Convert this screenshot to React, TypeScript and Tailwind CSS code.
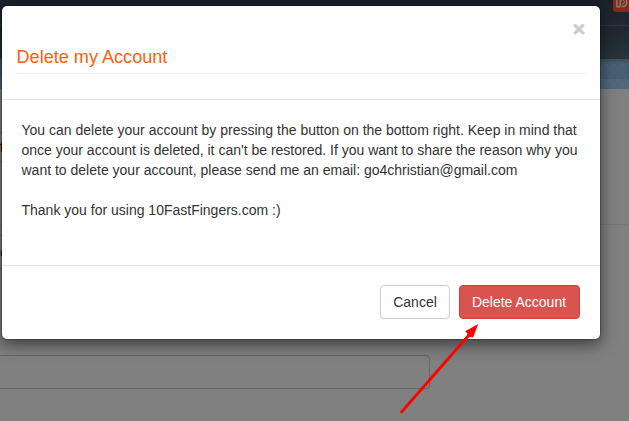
function PatreonBadge() {
  return (
    <svg className="block" width="16" height="12" viewBox="0 0 16 12">
      <path d="M0 0h16v12H3a3 3 0 0 1-3-3z" fill="#852a13" />
      <path d="M3.9 0v6.7h3.2" fill="none" stroke="#817b79" strokeWidth="1.5" />
      <path d="M7.2 6.7V1.5c0-1 .6-1.5 1.6-1.5M8.6 6.2c3 .8 5.2-1.2 5.2-3.8 0-1-.3-1.8-.8-2.4" fill="none" stroke="#817b79" strokeWidth="1.5" />
      <path d="M8.8 3.9c1.7.2 2.6-.6 2.6-1.7 0-.9-.5-1.5-1.3-2" fill="none" stroke="#817b79" strokeWidth="1" />
    </svg>
  );
}

function PageBackground() {
  return (
    <div className="flex h-full flex-col">
      <div className="flex h-[26px] shrink-0 justify-end border-b border-[#2f3a45] bg-gradient-to-b from-[#1a212b] to-[#1f2933]">
        <PatreonBadge />
      </div>
      <div className="h-[33px] shrink-0 bg-gradient-to-b from-[#1d262f] to-[#28333c]" />
      <div className="h-5 shrink-0 bg-[#475f75] bg-[repeating-conic-gradient(#475e73_0_25%,#496076_0_50%)] bg-[length:8px_8px] shadow-[inset_0_3px_3px_rgba(0,0,0,0.15)]" />
      <div className="h-2.5 shrink-0 bg-[#526980] bg-[repeating-conic-gradient(#50667b_0_25%,#52687d_0_50%)] bg-[length:8px_8px]" />
      <div className="flex grow flex-col bg-[#808080]">
        <div className="flex h-[136px] shrink-0 flex-col border-b border-[#757575]">
          <div className="mt-[43px] flex h-[30px] w-[5px] items-center border-y border-[#696969] text-sm text-[#210000]">
            t
          </div>
        </div>
        <div className="mt-2.5 flex h-[34px] w-2 shrink-0 items-center border-y border-[#696969] text-sm text-[#10153d]">
          c
        </div>
        <div className="mt-[86px] h-[34px] w-[430px] shrink-0 rounded-r border border-l-0 border-[#666]" />
      </div>
    </div>
  );
}

function DeleteAccountModal() {
  return (
    <div className="absolute top-[5px] left-px flex h-[335px] w-[600px] flex-col rounded-md border border-black/20 bg-white bg-clip-padding shadow-[0_5px_15px_rgba(0,0,0,0.5)]">
      <div className="h-[94px] shrink-0 border-b border-[#e5e5e5] px-[15px] pt-[15px]">
        <button className="float-right -mt-[3px] text-[21px] leading-[21px] font-bold text-[#ccc] [-webkit-text-stroke:0.8px_#ccc]">
          ×
        </button>
        <h4 className="clear-both pt-2">
          <span className="block h-[27px] border-b border-[#eee] text-[18.1px] leading-5 text-[#f26310] -indent-[0.5px]">
            Delete my Account
          </span>
        </h4>
      </div>
      <div className="grow pr-5 pl-[19.5px] pt-5 text-sm leading-5 whitespace-nowrap text-[#333]">
        <p>
          You can delete your account by pressing the button on the bottom right. Keep in mind that
          <br />
          once your account is deleted, it can't be restored. If you want to share the reason why you
          <br />
          want to delete your account, please send me an email: go4christian@gmail.com
        </p>
        <p className="mt-5">Thank you for using 10FastFingers.com :)</p>
      </div>
      <div className="flex h-[74px] shrink-0 items-start justify-end gap-[9px] border-t border-[#e5e5e5] px-5 pt-[19px] text-sm leading-5">
        <button className="h-[34px] w-[70px] rounded border border-[#ccc] bg-white text-[#333]">
          Cancel
        </button>
        <button className="h-[34px] w-[121px] rounded border border-[#d43f3a] bg-[#d9534f] pr-px text-white">
          Delete Account
        </button>
      </div>
    </div>
  );
}

function PointerArrow() {
  return (
    <svg className="absolute top-[320px] left-[396px]" width="86" height="96" viewBox="0 0 86 96">
      <path d="M5.5 92 73 15" stroke="#f00" strokeWidth="2.8" strokeLinecap="round" />
      <path d="M82.2 4 69.2 11.2l2.3 2.2-.3 2 2.2 1.8 2-.2 1.6.8z" fill="#f00" />
    </svg>
  );
}

export default function App() {
  return (
    <div className="relative h-[421px] w-[629px] overflow-hidden font-['Liberation_Sans',Arial,sans-serif]">
      <PageBackground />
      <DeleteAccountModal />
      <PointerArrow />
    </div>
  );
}
